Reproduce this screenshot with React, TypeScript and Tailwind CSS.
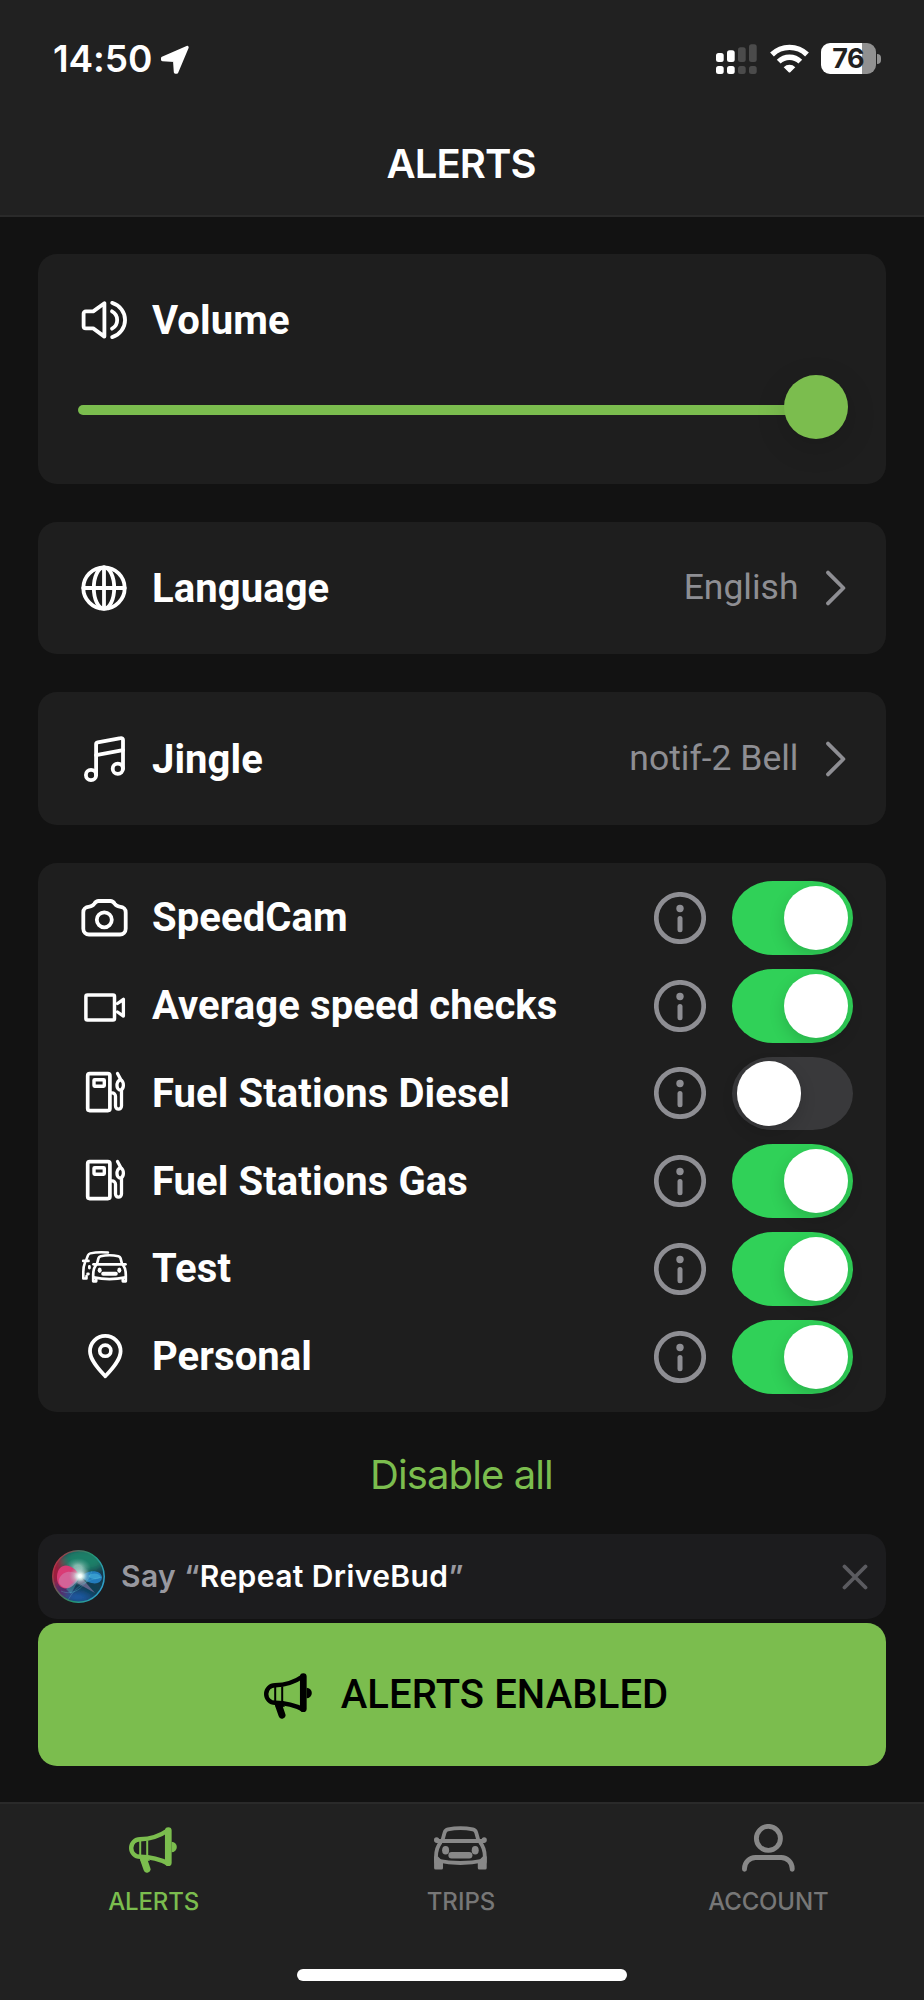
import React, { useState } from "react";

type IconProps = { className?: string };

const stroke = {
  fill: "none",
  stroke: "currentColor",
  strokeWidth: 3.8,
  strokeLinecap: "round" as const,
  strokeLinejoin: "round" as const,
};

function Icon48({ children }: { children: React.ReactNode }) {
  return (
    <svg className="block size-12 shrink-0 overflow-visible" viewBox="0 0 48 48" {...stroke}>
      {children}
    </svg>
  );
}

const VolumeIcon = () => (
  <Icon48>
    <path d="M24.4 7.2v33.4L13.2 32.4H5.8a2.2 2.2 0 0 1-2.2-2.2V17.6a2.2 2.2 0 0 1 2.2-2.2h7.4z" />
    <path d="M32.2 6.9a17.8 17.8 0 0 1 0 34.2" />
    <path d="M32 15.3a9.9 9.9 0 0 1 0 17.4" />
  </Icon48>
);

const GlobeIcon = () => (
  <Icon48>
    <circle cx="24" cy="24" r="20.7" />
    <ellipse cx="24" cy="24" rx="10.2" ry="20.7" />
    <path d="M24 3.3v41.4M3.3 24h41.4" />
  </Icon48>
);

const MusicIcon = () => (
  <Icon48>
    <circle cx="11" cy="40" r="5.1" />
    <circle cx="37.8" cy="33.8" r="5.1" />
    <path d="M16.1 40V9.3a2 2 0 0 1 1.6-2l23-4.2a1.9 1.9 0 0 1 2.3 1.9v28.8" />
    <path d="M16.1 20.2 43 15.2" />
  </Icon48>
);

const CameraIcon = () => (
  <Icon48>
    <path d="M3.3 18.6c0-4.6 2.6-5.6 6.2-6 2.2-.2 3.6-1 4.8-2.8 1.2-1.9 2.2-2.8 4.2-2.8h12c2 0 3 .9 4.2 2.8 1.2 1.8 2.6 2.6 4.8 2.8 3.6.4 6.2 1.4 6.2 6v16.2a5.7 5.7 0 0 1-5.7 5.7H9a5.7 5.7 0 0 1-5.7-5.7z" />
    <circle cx="24.3" cy="25.8" r="7.5" />
  </Icon48>
);

const VideoIcon = () => (
  <Icon48>
    <rect x="5.9" y="13" width="28.6" height="25" rx="1.5" strokeWidth="3.5" />
    <path d="M37.5 21.5 43.4 17.3v16.8L37.5 30" strokeWidth="3.3" />
  </Icon48>
);

const FuelIcon = () => (
  <Icon48>
    <g strokeWidth="3.7">
      <rect x="7.7" y="4.7" width="22.2" height="36.9" rx="2" />
      <rect x="14" y="10.7" width="10.3" height="6.5" rx=".6" strokeWidth="3.4" />
      <path
        d="M31.5 23.8h.6a3.4 3.4 0 0 1 3.4 3.4v9.9a3 3 0 0 0 6 0V21.5M37.5 4.5l3 5.500M40.2 10.2c-2 1.9-3.2 2.9-3.2 4.8v2c0 1.9 1.4 4 3.8 4.4 1.7-1.3 2.6-3.2 2.6-5.2 0-2.9-1.2-4.6-3.2-6z"
        strokeWidth="3.3"
      />
    </g>
  </Icon48>
);

const CarsIcon = () => (
  <Icon48>
    <g strokeWidth="2.7">
      <path d="M17 18.800 18.500 13.200Q19 11.600 20.600 11.200 29.500 9.300 38.400 11.200 40 11.600 40.500 13.200L42 18.800" />
      <path d="M13.500 19.300H45.500" />
      <path d="M15.800 20.300C13.600 23 13.200 26 13.200 30V36.300H16.200V33.500M43.200 20.300C45.400 23 45.800 26 45.800 30V36.300H42.800V33.500" />
      <path d="M13.600 32.400Q29.500 35.800 45.400 32.400" />
      <path d="M6.300 14.700 8 10.300Q8.600 8.800 10.200 8.400 18 6.700 28 7.600" strokeWidth="2.500" />
      <path d="M3.200 15.900H8.500" />
      <path d="M5 17.500C3.700 20.500 3.300 23 3.300 27V33.500H6.500V31" strokeWidth="2.600" />
      <path d="M9.400 21.500v1.600M7.600 29h.8" strokeWidth="2.800" />
    </g>
    <g fill="currentColor" stroke="none">
      <ellipse cx="19.700" cy="25.300" rx="2" ry="2.700" />
      <ellipse cx="39.300" cy="25.300" rx="2" ry="2.700" />
      <rect x="21.200" y="26.800" width="16.600" height="3.900" rx="1.900" />
    </g>
  </Icon48>
);

const PinIcon = () => (
  <Icon48>
    <path d="M25.3 43.3C20 37.5 10 27.5 10 18.2a15.3 15.3 0 0 1 30.6 0C40.6 27.5 30.6 37.5 25.3 43.3z" />
    <circle cx="25.3" cy="17.7" r="5.6" strokeWidth="3.6" />
  </Icon48>
);

const InfoIcon = () => (
  <svg className="block size-[52px] text-[#8e8e93]" viewBox="0 0 52 52">
    <circle cx="26" cy="26" r="23.7" fill="none" stroke="currentColor" strokeWidth="4.7" />
    <circle cx="26" cy="16.5" r="3.7" fill="currentColor" />
    <rect x="23.5" y="23.9" width="5" height="16.3" rx="2.5" fill="currentColor" />
  </svg>
);

const Megaphone = ({ className = "" }: IconProps) => (
  <svg className={`block h-[46px] w-12 ${className}`} viewBox="0 0 48 46" fill="none" stroke="currentColor" strokeLinecap="round" strokeLinejoin="round">
    <path d="M39 3.2C31 8.8 22 12 11 12.2a8.8 8.8 0 0 0 0 17.6C22 30 31 32.2 39 36.6" strokeWidth="4.4" />
    <path d="M39.3 3.7v32" strokeWidth="6.7" />
    <path d="M42.6 14.8a5.2 5.2 0 0 1 0 10.4z" fill="currentColor" stroke="none" />
    <path d="M11.2 13.5v15.5M18.2 13.5v15.5" strokeWidth="2" strokeLinecap="butt" />
    <path d="M14.5 32 18 42.2" strokeWidth="7" />
    <path d="M11 29.8h7l3 4-9 .5z" fill="currentColor" stroke="none" />
  </svg>
);

const CarIcon = () => (
  <svg className="block h-[44px] w-[53px]" viewBox="0 0 53 44">
    <g fill="none" stroke="currentColor" strokeWidth="3.8" strokeLinecap="round" strokeLinejoin="round">
      <path d="M8.4 14.5 10.7 6.3Q11.5 3.9 14 3.4 26.5.9 38.8 3.4 41.3 3.9 42.1 6.3L44.4 14.5" />
      <path d="M3 15h46.8" />
      <path d="M6.5 16.5C3.3 20.5 2.1 24.5 2 30.5V36M46.3 16.5C49.5 20.5 50.7 24.5 50.8 30.5V36" />
      <path d="M3 34.5Q26.4 39.5 49.8 34.5" />
    </g>
    <g fill="currentColor">
      <ellipse cx="2.6" cy="14" rx="2.6" ry="2.7" />
      <ellipse cx="50.2" cy="14" rx="2.6" ry="2.7" />
      <path d="M.1 30.5H4L9 35.5V42a1.5 1.5 0 0 1-1.5 1.5H1.6A1.5 1.5 0 0 1 .1 42zM52.7 30.5H48.8L43.8 35.5V42a1.5 1.5 0 0 0 1.5 1.5H51.2A1.5 1.5 0 0 0 52.7 42z" />
      <ellipse cx="11.6" cy="24.2" rx="3.5" ry="4.3" />
      <ellipse cx="41.2" cy="24.2" rx="3.5" ry="4.3" />
      <rect x="14.4" y="26" width="24" height="6.4" rx="3.2" />
    </g>
  </svg>
);

const UserIcon = () => (
  <svg className="block h-[48px] w-[53px]" viewBox="0 0 53 48" fill="none" stroke="currentColor" strokeWidth="4.9" strokeLinecap="round">
    <circle cx="26.4" cy="14.4" r="12" />
    <path d="M2.5 45.3V44.5A11 11 0 0 1 13.5 33.5H39.2A11 11 0 0 1 50.2 44.5V45.3" />
  </svg>
);

const Chevron = () => (
  <svg className="ml-[27px] block h-[36px] w-[20px] shrink-0 text-[#8e8e93]" viewBox="0 0 20 36" {...stroke}>
    <path d="M2 2.6 17.4 18 2 33.4" />
  </svg>
);

const SiriOrb = () => (
  <svg className="block size-[53px] shrink-0" viewBox="0 0 53 53">
    <defs>
      <clipPath id="orb">
        <circle cx="26.5" cy="26.5" r="26" />
      </clipPath>
      <linearGradient id="rim" x1="0" y1=".2" x2="1" y2=".6">
        <stop offset="0" stopColor="#c5283f" />
        <stop offset=".35" stopColor="#4f6a5e" />
        <stop offset=".6" stopColor="#23946f" />
        <stop offset="1" stopColor="#2f9fc9" />
      </linearGradient>
      <filter id="soft3" x="-60%" y="-60%" width="220%" height="220%">
        <feGaussianBlur stdDeviation="3.5" />
      </filter>
      <filter id="soft1" x="-60%" y="-60%" width="220%" height="220%">
        <feGaussianBlur stdDeviation=".7" />
      </filter>
      <radialGradient id="glow">
        <stop offset="0" stopColor="#fff" />
        <stop offset=".3" stopColor="#f4fffc" stopOpacity=".95" />
        <stop offset=".6" stopColor="#c9e6df" stopOpacity=".5" />
        <stop offset="1" stopColor="#8fd0c4" stopOpacity="0" />
      </radialGradient>
    </defs>
    <g clipPath="url(#orb)">
      <rect width="53" height="53" fill="#17384d" />
      <g filter="url(#soft3)">
        <ellipse cx="32" cy="10" rx="21" ry="12" fill="#1d7f68" />
        <ellipse cx="3" cy="22" rx="8" ry="18" fill="#a01c3c" />
        <ellipse cx="8" cy="42" rx="10" ry="9" fill="#552a6b" />
        <ellipse cx="27" cy="47" rx="14" ry="6" fill="#1c5aa6" />
        <ellipse cx="40" cy="39" rx="11" ry="7" fill="#0d4054" />
      </g>
      <ellipse cx="26" cy="18" rx="13" ry="10" fill="url(#glow)" opacity=".5" />
      <g filter="url(#soft1)">
        <path d="M5 26C6 12 20 12 28 26 23 34 19 39 13 38.500 8 38 4.500 33 5 26z" fill="#d93a74" />
        <path d="M7 29C11 20 21 20 28 26 23 37 16 39.500 11 37 7.500 35 6 32 7 29z" fill="#d271a4" opacity=".75" />
        <path d="M29 26.500C36 19.500 49 19.500 50 27.500 49 36 37 35 29 26.500z" fill="#2386cf" opacity=".85" />
        <path d="M36 26C40 22 48 23 49 27.500 45 30 40 30 36 26z" fill="#45b3dc" opacity=".6" />
        <path d="M28 26 43 43 25 33z" fill="#9c7fb0" opacity=".55" />
        <path d="M28 27 19 44 14 39z" fill="#4cb4c4" opacity=".4" />
      </g>
      <path d="M16 50C24 36 34 30 50 27M9 41C20 46 32 40 40 21" fill="none" stroke="#5cc9d8" strokeOpacity=".35" strokeWidth=".8" />
      <ellipse cx="28" cy="26" rx="11" ry="10" fill="url(#glow)" opacity=".8" />
      <ellipse cx="28" cy="26" rx="6" ry="5.500" fill="url(#glow)" />
    </g>
    <circle cx="26.5" cy="26.5" r="25.7" fill="none" stroke="url(#rim)" strokeWidth="1.5" />
  </svg>
);

function StatusBar() {
  return (
    <div className="flex h-[118px] items-center justify-between pr-[43px] pl-[53px]">
      <div className="flex items-center gap-[8px] pt-px">
        <span className="-mt-px text-[37px] leading-[44px] font-semibold tracking-[-0.1px]">14:50</span>
        <svg className="block h-[30px] w-[30px]" viewBox="0 0 30 30" fill="currentColor" stroke="currentColor" strokeWidth="3" strokeLinejoin="round">
          <path d="M27.2 2.3 16.8 27.2 15.3 27.2 14.5 15.6 2.5 14.8 2.5 13.2z" />
        </svg>
      </div>
      <div className="-mt-px flex items-center">
        <svg className="block h-[31px] w-[42px]" viewBox="0 0 42 31">
          <g fill="#fff">
            <rect x="0" y="10" width="7.7" height="9" rx="2.5" />
            <rect x="11" y="7.3" width="7.7" height="11.7" rx="2.5" />
            <rect x="0" y="23" width="7.7" height="8" rx="2.5" />
            <rect x="11" y="23" width="7.7" height="8" rx="2.5" />
          </g>
          <g fill="#4b4b4b">
            <rect x="22" y="4.3" width="7.7" height="14.7" rx="2.5" />
            <rect x="33" y="1.3" width="7.7" height="17.7" rx="2.5" />
            <rect x="22" y="23" width="7.7" height="8" rx="2.5" />
            <rect x="33" y="23" width="7.7" height="8" rx="2.5" />
          </g>
        </svg>
        <svg className="ml-[11.5px] block h-[29px] w-[39px]" viewBox="0 0 39 29">
          <g fill="none" stroke="#fff" strokeWidth="5.4">
            <path d="M2 10.5a25 25 0 0 1 35 0" />
            <path d="M8.7 17.6a15.4 15.4 0 0 1 21.6 0" />
          </g>
          <path d="M13.7 23.2a8.3 8.3 0 0 1 11.6 0L20.3 28.2a1.1 1.1 0 0 1-1.6 0z" fill="#fff" />
        </svg>
        <div className="ml-[12.5px] flex items-center gap-[1.5px]">
          <div className="flex h-[31px] w-[54.5px] items-center justify-center rounded-[9px] bg-[linear-gradient(90deg,#fff_0_41px,#919191_41px)]">
            <span className="text-[27px] leading-[31px] font-bold tracking-[-0.3px] text-[#212121]">76</span>
          </div>
          <div className="h-[10px] w-[4px] rounded-r-full bg-[#919191]" />
        </div>
      </div>
    </div>
  );
}

function Label({ children }: { children: React.ReactNode }) {
  return <span className="pt-px text-[40px] leading-[48px] font-bold tracking-[0.09px] whitespace-nowrap">{children}</span>;
}

function LinkCard({ icon, label, value }: { icon: React.ReactNode; label: string; value: string }) {
  return (
    <section className="flex h-[132.7px] items-center rounded-[19px] bg-[#1e1e1e] pr-[40.5px] pl-[42px]">
      {icon}
      <div className="ml-6 flex grow pt-px">
        <Label>{label}</Label>
      </div>
      <span className="pb-px text-[35.5px] leading-[44px] text-[#8e8e93]">{value}</span>
      <Chevron />
    </section>
  );
}

function Toggle({ on, onClick }: { on: boolean; onClick: () => void }) {
  return (
    <button
      role="switch"
      aria-checked={on}
      onClick={onClick}
      className={`flex h-[73.7px] w-[121px] items-center rounded-[41px/37px] ${on ? "justify-end bg-[#30d158] pr-[4.8px]" : "justify-start bg-[#39393b] pl-[4.5px]"}`}
    >
      <span className="block size-[64.3px] rounded-full bg-white shadow-[0_6px_16px_rgba(0,0,0,0.15)]" />
    </button>
  );
}

const ALERT_TYPES = [
  { label: "SpeedCam", icon: <CameraIcon />, on: true },
  { label: "Average speed checks", icon: <VideoIcon />, on: true },
  { label: "Fuel Stations Diesel", icon: <FuelIcon />, on: false },
  { label: "Fuel Stations Gas", icon: <FuelIcon />, on: true },
  { label: "Test", icon: <CarsIcon />, on: true },
  { label: "Personal", icon: <PinIcon />, on: true },
];

export default function App() {
  const [states, setStates] = useState(ALERT_TYPES.map((t) => t.on));
  const toggle = (i: number) => setStates(states.map((s, j) => (i === j ? !s : s)));

  return (
    <div className="flex h-[2000px] w-[924px] flex-col overflow-hidden bg-[#121212] font-['Roboto','Liberation_Sans',sans-serif] text-white">
      <header className="h-[217px] shrink-0 border-b-2 border-[#2a2a2a] bg-[#212121] font-['Inter',sans-serif]">
        <StatusBar />
        <h1 className="mt-[22px] pr-[2px] text-center text-[40px] leading-[48px] font-semibold tracking-[-0.9px]">ALERTS</h1>
      </header>

      <main className="flex grow flex-col px-[38px] pt-[36.5px]">
        <div className="flex flex-col gap-[38px]">
          <section className="h-[230px] rounded-[19px] bg-[#1e1e1e] pt-[42px] pl-[40px]">
            <div className="flex items-center gap-6 pl-[2px]">
              <VolumeIcon />
              <Label>Volume</Label>
            </div>
            <div className="mt-[30.5px] flex h-[64.3px] w-[770.3px] items-center">
              <div className="mt-[5px] -mr-3 h-[10px] grow rounded-full bg-[#7bbd4e]" />
              <div className="size-[64.3px] rounded-full bg-[#7bbd4e] shadow-[0_8px_30px_rgba(0,0,0,0.15)]" />
            </div>
          </section>

          <LinkCard icon={<GlobeIcon />} label="Language" value="English" />
          <LinkCard icon={<MusicIcon />} label="Jingle" value="notif-2 Bell" />

          <section className="h-[549.3px] rounded-[19px] bg-[#1e1e1e] pt-[11.2px] pr-[33px] pl-[42px]">
            {ALERT_TYPES.map((t, i) => (
              <div key={t.label} className="flex h-[87.75px] items-center">
                {t.icon}
                <div className="ml-6 flex grow">
                  <Label>{t.label}</Label>
                </div>
                <InfoIcon />
                <div className="ml-[26px]">
                  <Toggle on={states[i]} onClick={() => toggle(i)} />
                </div>
              </div>
            ))}
          </section>
        </div>

        <div className="flex h-[122px] items-center justify-center pt-[3.5px] pr-px font-['Inter',sans-serif]">
          <button className="text-[40px] leading-[48px] tracking-[-0.9px] text-[#7bbd4e]">Disable all</button>
        </div>

        <div className="flex h-[85px] items-center rounded-[19px] bg-[#1c1c1e] pr-[18px] pl-[14px] font-['Inter',sans-serif]">
          <SiriOrb />
          <p className="ml-[16px] grow pb-[2px] text-[30px] leading-[36px] font-semibold tracking-[0.42px] text-[#98989f]">
            Say “<span className="text-white">Repeat DriveBud</span>”
          </p>
          <svg className="block size-[26px] text-[#5b5b60]" viewBox="0 0 26 26" {...stroke}>
            <path d="M2.5 2.5 23.5 23.5M23.5 2.5 2.5 23.5" />
          </svg>
        </div>

        <button className="mt-[4px] flex h-[142.7px] items-center justify-center rounded-[19px] bg-[#7bbd4e] pl-[8px] text-black">
          <Megaphone className="mt-[2px]" />
          <span className="ml-[29px] text-[40px] leading-[48px] font-medium tracking-[0.1px]">ALERTS ENABLED</span>
        </button>
      </main>

      <nav className="flex h-[198px] shrink-0 flex-col items-center justify-between border-t-2 border-[#2a2a2a] bg-[#212121] font-['Inter',sans-serif]">
        <div className="grid w-full grid-cols-3 pt-[18px] pr-[2px] text-[24px] leading-[30px] font-medium text-[#777777]">
          <div className="flex flex-col items-center text-[#7bbd4e]">
            <div className="flex h-[52px] items-center">
              <Megaphone className="mt-[4px] mr-[1px]" />
            </div>
            <span className="mt-[13px] tracking-[-0.15px]">ALERTS</span>
          </div>
          <div className="flex flex-col items-center">
            <div className="flex h-[52px] items-center text-[#888888]">
              <CarIcon />
            </div>
            <span className="mt-[13px]">TRIPS</span>
          </div>
          <div className="flex flex-col items-center">
            <div className="flex h-[52px] items-center text-[#888888]">
              <UserIcon />
            </div>
            <span className="mt-[13px] tracking-[-0.15px]">ACCOUNT</span>
          </div>
        </div>
        <div className="mb-[19px] h-[12.3px] w-[330px] rounded-full bg-white" />
      </nav>
    </div>
  );
}
